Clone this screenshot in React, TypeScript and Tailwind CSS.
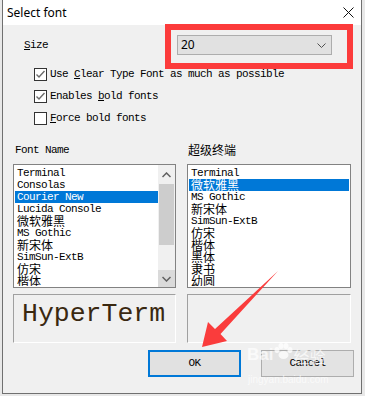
const mono = "font-['Liberation_Mono','Noto_Sans_CJK_SC',monospace] text-[11px] tracking-[-0.6px]";
const cjk = "font-['Noto_Sans_CJK_SC',sans-serif] text-[12px]";

type Item = { label: string; cjk?: boolean };

const leftFonts: Item[] = [
  { label: "Terminal" },
  { label: "Consolas" },
  { label: "Courier New" },
  { label: "Lucida Console" },
  { label: "微软雅黑", cjk: true },
  { label: "MS Gothic" },
  { label: "新宋体", cjk: true },
  { label: "SimSun-ExtB" },
  { label: "仿宋", cjk: true },
  { label: "楷体", cjk: true },
];

const rightFonts: Item[] = [
  { label: "Terminal" },
  { label: "微软雅黑", cjk: true },
  { label: "MS Gothic" },
  { label: "新宋体", cjk: true },
  { label: "SimSun-ExtB" },
  { label: "仿宋", cjk: true },
  { label: "楷体", cjk: true },
  { label: "黑体", cjk: true },
  { label: "隶书", cjk: true },
  { label: "幼圆", cjk: true },
];

function Checkbox({ checked, children }: { checked?: boolean; children: React.ReactNode }) {
  return (
    <div className="flex h-[13px] items-center">
      <div className="ml-[31px] flex h-[13px] w-[13px] items-center justify-center border border-[#333333] bg-white">
        {checked && (
          <svg width="11" height="11" viewBox="0 0 11 11">
            <path d="M1.5 5.5 L4 8 L9.5 2" fill="none" stroke="#6b6b6b" strokeWidth="1.4" />
          </svg>
        )}
      </div>
      <span className={`ml-[3px] text-black ${mono}`}>{children}</span>
    </div>
  );
}

function FontList({ items, selected, scroll }: { items: Item[]; selected: number; scroll?: boolean }) {
  return (
    <div className="flex h-[124px] border border-[#828282] bg-white p-[1px]">
      <div className="flex-1 overflow-hidden pt-[1px]">
        {items.map((item, i) => (
          <div
            key={item.label + i}
            className={`h-[12px] whitespace-nowrap pl-[2px] leading-[12px] ${
              i === selected ? "bg-[#0078d7] text-white" : "text-black"
            } ${item.cjk ? cjk : mono}`}
          >
            {item.label}
          </div>
        ))}
      </div>
      {scroll && (
        <div className="-my-[1px] -mr-[1px] flex w-[17px] flex-col bg-[#f0f0f0]">
          <div className="flex h-[19px] items-center justify-center">
            <svg width="9" height="6" viewBox="0 0 9 6">
              <path d="M0.5 5 L4.5 1 L8.5 5" fill="none" stroke="#606060" strokeWidth="1.5" />
            </svg>
          </div>
          <div className="mx-[1px] h-[61px] bg-[#cdcdcd]" />
          <div className="flex-1" />
          <div className="flex h-[17px] items-center justify-center bg-[#dadada]">
            <svg width="9" height="6" viewBox="0 0 9 6">
              <path d="M0.5 1 L4.5 5 L8.5 1" fill="none" stroke="#606060" strokeWidth="1.5" />
            </svg>
          </div>
        </div>
      )}
    </div>
  );
}

export default function App() {
  return (
    <div className="relative h-[396px] w-[365px] overflow-hidden bg-[#e8e8e8]">
      <div className="ml-[2px] flex h-[394px] w-[360px] flex-col border-x border-b border-[#707070] bg-[#f0f0f0]">
        {/* title bar */}
        <div className="flex h-[25px] shrink-0 items-center justify-between bg-white pl-[4px] pr-[7px]">
          <span className="font-['Noto_Sans',sans-serif] text-[12px] text-black">Select font</span>
          <svg width="11" height="11" viewBox="0 0 11 11">
            <path d="M0.5 0.5 L10.5 10.5 M10.5 0.5 L0.5 10.5" stroke="#111" strokeWidth="1" />
          </svg>
        </div>

        {/* size row */}
        <div className="mt-[10px] flex h-[20px] items-center">
          <span className={`ml-[21px] w-[153px] text-black ${mono}`}>
            <span className="underline underline-offset-[1px]">S</span>ize
          </span>
          <div className="flex h-[20px] w-[155px] items-center justify-between border border-[#adadad] bg-[#e1e1e1] pl-[3px] pr-[5px]">
            <span className="font-['Noto_Sans',sans-serif] text-[12px] text-black">20</span>
            <svg width="9" height="5" viewBox="0 0 9 5">
              <path d="M0.5 0.5 L4.5 4.5 L8.5 0.5" fill="none" stroke="#505050" strokeWidth="1" />
            </svg>
          </div>
        </div>

        {/* options */}
        <div className="mt-[13px] flex flex-col gap-[9px]">
          <Checkbox checked>
            Use <span className="underline underline-offset-[1px]">C</span>lear Type Font as much as possible
          </Checkbox>
          <Checkbox checked>
            Enables <span className="underline underline-offset-[1px]">b</span>old fonts
          </Checkbox>
          <Checkbox>
            <span className="underline underline-offset-[1px]">F</span>orce bold fonts
          </Checkbox>
        </div>

        {/* font lists */}
        <div className="mt-[19px] flex gap-[11px] px-[10px]">
          <div className="w-[163px]">
            <div className={`h-[12px] pl-[2px] leading-[12px] text-black ${mono}`}>Font Name</div>
            <div className="mt-[8px]">
              <FontList items={leftFonts} selected={2} scroll />
            </div>
            <div className="mt-[6px] flex h-[49px] items-start border border-t-[#a0a0a0] border-l-[#a0a0a0] border-b-white border-r-white pl-[8px] pt-[4px]">
              <span className="font-['Liberation_Mono',monospace] text-[26.5px] leading-[30px] text-[#3a2810]">
                HyperTerm
              </span>
            </div>
          </div>
          <div className="w-[164px]">
            <div className={`h-[12px] pl-[1px] leading-[12px] text-black ${cjk}`}>超级终端</div>
            <div className="mt-[8px]">
              <FontList items={rightFonts} selected={1} />
            </div>
            <div className="mt-[6px] h-[49px] border border-t-[#a0a0a0] border-l-[#a0a0a0] border-b-white border-r-white" />
          </div>
        </div>

        {/* buttons */}
        <div className="mt-[7px] flex gap-[20px] pl-[145px]">
          <div className="flex h-[27px] w-[93px] items-center justify-center border-2 border-[#0078d7] bg-[#e1e1e1]">
            <span className={`text-black ${mono}`}>OK</span>
          </div>
          <div className="flex h-[27px] w-[93px] items-center justify-center border border-[#adadad] bg-[#e3e3e3]">
            <span className={`text-black ${mono}`}>Cancel</span>
          </div>
        </div>
      </div>

      {/* red highlight box */}
      <div className="absolute left-[165px] top-[24px] h-[45px] w-[188px] border-[6px] border-[#fc3b3b]" />

      {/* watermark */}
      <div className="pointer-events-none absolute left-[247px] top-[342px] flex items-end text-white/70">
        <span className="font-['Liberation_Sans',sans-serif] text-[17px] font-bold leading-[26px]">Bai</span>
        <svg className="mb-[8px]" width="20" height="17" viewBox="0 0 20 17">
          <g fill="rgba(255,255,255,0.75)">
            <ellipse cx="4" cy="7" rx="2.5" ry="3" />
            <ellipse cx="8" cy="3" rx="2.5" ry="3" />
            <ellipse cx="13" cy="3" rx="2.5" ry="3" />
            <ellipse cx="17" cy="7" rx="2.5" ry="3" />
            <ellipse cx="10.5" cy="12" rx="5" ry="4" />
          </g>
        </svg>
        <span className="font-['Noto_Sans_CJK_SC',sans-serif] text-[16px] leading-[24px]">经验</span>
      </div>
      <div className="pointer-events-none absolute left-[248px] top-[374px] font-['Liberation_Sans',sans-serif] text-[10px] leading-[12px] text-white/70">
        jingyan.baidu.com
      </div>

      {/* red arrow */}
      <svg className="pointer-events-none absolute left-0 top-0" width="365" height="396" viewBox="0 0 365 396">
        <polygon points="278,271 220.5,334 227,341 202,347 208,322 215,329" fill="#fa3c3c" />
      </svg>
    </div>
  );
}
